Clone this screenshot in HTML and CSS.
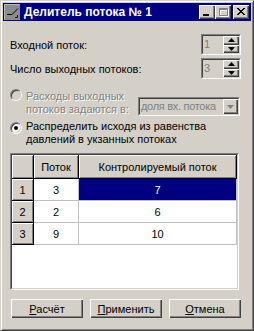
FILE: index.html
```html
<!DOCTYPE html>
<html lang="ru">
<head>
    <meta charset="UTF-8">
    <meta name="viewport" content="width=device-width, initial-scale=1.0">
    <title>Делитель потока № 1</title>
    <link rel="stylesheet" href="styles.css">
</head>
<body>

    <div class="window">
        <!-- Заголовок окна -->
        <div class="titlebar">
            <svg class="app-icon" width="16" height="16" viewBox="0 0 16 16">
                <rect x="0" y="0" width="16" height="16" fill="#8c8c8c"/>
                <path d="M0.5 15.5 V0.5 H15.5" fill="none" stroke="#b8b8b8"/>
                <path d="M3 10.5 H8 L14 4.5" fill="none" stroke="#000"/>
                <path d="M11 13.5 H13.5 V11" fill="none" stroke="#000"/>
            </svg>
            <span class="title">Делитель потока № 1</span>
            <div class="caption-btns">
                <div class="cap-btn">
                    <svg width="16" height="14"><rect x="4" y="9" width="6" height="2" fill="#000"/></svg>
                </div>
                <div class="cap-btn">
                    <svg width="16" height="14">
                        <path d="M4.5 3.5 H12.5 V10.5 H4.5 Z M4.5 4.5 H12.5" fill="none" stroke="#fff" transform="translate(1 1)"/>
                        <path d="M3.5 2.5 H11.5 V9.5 H3.5 Z M3.5 3.5 H11.5" fill="none" stroke="#808080" transform="translate(1 1)"/>
                    </svg>
                </div>
                <div class="cap-btn close">
                    <svg width="16" height="14"><path d="M4 3 L11 10 M5 3 L12 10 M11 3 L4 10 M12 3 L5 10" stroke="#000" stroke-width="1"/></svg>
                </div>
            </div>
        </div>

        <div class="content">
            <div class="field-row">
                <span>Входной поток:</span>
                <div class="spin">
                    <div class="spin-inner">
                        <span class="spin-value">1</span>
                        <div class="spin-btns">
                            <div class="spin-btn"><svg width="7" height="4"><path d="M3.5 0 L7 4 H0 Z" fill="#000"/></svg></div>
                            <div class="spin-btn"><svg width="7" height="4"><path d="M0 0 H7 L3.5 4 Z" fill="#000"/></svg></div>
                        </div>
                    </div>
                </div>
            </div>
            <div class="field-row">
                <span>Число выходных потоков:</span>
                <div class="spin">
                    <div class="spin-inner">
                        <span class="spin-value">3</span>
                        <div class="spin-btns">
                            <div class="spin-btn"><svg width="7" height="4"><path d="M3.5 0 L7 4 H0 Z" fill="#000"/></svg></div>
                            <div class="spin-btn"><svg width="7" height="4"><path d="M0 0 H7 L3.5 4 Z" fill="#000"/></svg></div>
                        </div>
                    </div>
                </div>
            </div>

            <!-- Переключатели -->
            <div class="option first disabled">
                <span class="radio"><span class="radio-in"></span></span>
                <div class="option-text">
                    <div class="line">Расходы выходных</div>
                    <div class="line-combo">
                        <span>потоков задаются в:</span>
                        <div class="combo">
                            <div class="combo-inner">
                                <span class="combo-value">доля вх. потока</span>
                                <div class="combo-btn"><svg width="7" height="4"><path d="M0 0 H7 L3.5 4 Z" fill="#808080"/></svg></div>
                            </div>
                        </div>
                    </div>
                </div>
            </div>
            <div class="option second">
                <span class="radio"><span class="radio-in checked"></span></span>
                <div class="option-text">
                    <div class="line">Распределить исходя из равенства</div>
                    <div class="line">давлений в укзанных потоках</div>
                </div>
            </div>

            <!-- Таблица потоков -->
            <div class="grid">
                <div class="grid-inner">
                    <div class="cell fixed"></div>
                    <div class="cell fixed">Поток</div>
                    <div class="cell fixed">Контролируемый поток</div>

                    <div class="cell fixed">1</div>
                    <div class="cell">3</div>
                    <div class="cell selected">7</div>

                    <div class="cell fixed">2</div>
                    <div class="cell">2</div>
                    <div class="cell">6</div>

                    <div class="cell fixed">3</div>
                    <div class="cell">9</div>
                    <div class="cell">10</div>
                </div>
            </div>

            <div class="buttons">
                <button class="btn"><u>Р</u>асчёт</button>
                <button class="btn"><u>П</u>рименить</button>
                <button class="btn"><u>О</u>тмена</button>
            </div>
        </div>
    </div>

</body>
</html>
```

FILE: styles.css
```css
/* Сброс */
* {
    box-sizing: border-box;
}

body {
    margin: 0;
    background: #d4d0c8;
    font-family: "Liberation Sans", Arial, sans-serif;
    font-size: 11px;
    color: #000;
}

/* Рамка окна */
.window {
    width: 254px;
    height: 331px;
    background: #d4d0c8;
    border: 1px solid;
    border-color: #d4d0c8 #404040 #404040 #d4d0c8;
    box-shadow: inset 1px 1px #fff, inset -1px -1px #808080;
    padding: 2px;
}

/* Заголовок */
.titlebar {
    height: 18px;
    background: #000080;
    display: flex;
    align-items: center;
    padding-left: 1px;
    padding-right: 2px;
}

.app-icon {
    display: block;
}

.title {
    color: #fff;
    font-weight: bold;
    font-size: 12px;
    margin-left: 4px;
}

.caption-btns {
    margin-left: auto;
    display: flex;
}

.cap-btn {
    width: 16px;
    height: 14px;
    background: #d4d0c8;
    box-shadow: inset 1px 1px #fff, inset -1px -1px #404040, inset -2px -2px #808080;
}

.cap-btn svg {
    display: block;
}

.cap-btn.close {
    margin-left: 2px;
}

/* Содержимое */
.content {
    padding: 13px 10px 0 7px;
}

.field-row {
    display: flex;
    justify-content: space-between;
    align-items: center;
    height: 21px;
    margin-bottom: 3px;
}

/* Поле со счётчиком */
.spin {
    width: 40px;
    height: 21px;
    border: 1px solid;
    border-color: #808080 #fff #fff #808080;
}

.spin-inner {
    height: 100%;
    border: 1px solid;
    border-color: #404040 #d4d0c8 #d4d0c8 #404040;
    display: flex;
}

.spin-value {
    flex: 1;
    color: #808080;
    padding-left: 1px;
    line-height: 16px;
}

.spin-btns {
    width: 16px;
    display: flex;
    flex-direction: column;
}

.spin-btn {
    flex: 1;
    background: #d4d0c8;
    box-shadow: inset 1px 1px #fff, inset -1px -1px #404040, inset -2px -2px #808080;
    display: flex;
    align-items: center;
    justify-content: center;
}

.spin-btn svg {
    display: block;
}

/* Переключатели */
.option {
    display: flex;
    line-height: 13px;
}

.option.first {
    margin-top: 11px;
}

.option.first .radio {
    margin-top: -1px;
}

.option.second {
    margin-top: 4px;
}

.option.second .radio {
    margin-top: 2px;
}

.option.disabled {
    color: #808080;
    text-shadow: 1px 1px #fff;
}

.radio {
    width: 12px;
    height: 12px;
    margin-right: 4px;
    flex: none;
    border-radius: 50%;
    background: linear-gradient(135deg, #808080 50%, #fff 50%);
    padding: 1px;
}

.radio-in {
    display: block;
    width: 10px;
    height: 10px;
    border-radius: 50%;
    background: #fff;
    box-shadow: inset 1px 1px #404040, inset -1px -1px #d4d0c8;
    position: relative;
}

.option.disabled .radio-in {
    background: #d4d0c8;
}

.radio-in.checked::after {
    content: "";
    position: absolute;
    left: 3px;
    top: 3px;
    width: 4px;
    height: 4px;
    border-radius: 50%;
    background: #000;
}

.option-text {
    flex: 1;
}

.line-combo {
    display: flex;
    align-items: flex-end;
    justify-content: space-between;
    margin-top: -6px;
}

/* Выпадающий список */
.combo {
    width: 102px;
    height: 19px;
    margin-right: 1px;
    border: 1px solid;
    border-color: #808080 #fff #fff #808080;
    text-shadow: none;
}

.combo-inner {
    height: 100%;
    border: 1px solid;
    border-color: #404040 #d4d0c8 #d4d0c8 #404040;
    display: flex;
}

.combo-value {
    flex: 1;
    color: #808080;
    padding-left: 1px;
    line-height: 15px;
    letter-spacing: -0.3px;
    white-space: nowrap;
    overflow: hidden;
}

.combo-btn {
    width: 15px;
    flex: none;
    background: #d4d0c8;
    box-shadow: inset 1px 1px #fff, inset -1px -1px #404040, inset -2px -2px #808080;
    display: flex;
    align-items: center;
    justify-content: center;
}

.combo-btn svg {
    display: block;
}

/* Таблица */
.grid {
    margin-top: 7px;
    width: 229px;
    height: 137px;
    border: 1px solid;
    border-color: #808080 #fff #fff #808080;
    background: #fff;
}

.grid-inner {
    height: 100%;
    border: 1px solid;
    border-color: #404040 #d4d0c8 #d4d0c8 #404040;
    display: grid;
    grid-template-columns: 22px 45px 158px;
    grid-template-rows: 24px repeat(3, 22px);
    align-content: start;
}

.cell {
    border-right: 1px solid #c0c0c0;
    border-bottom: 1px solid #c0c0c0;
    display: flex;
    align-items: center;
    justify-content: center;
}

.cell.fixed {
    background: #d4d0c8;
    border-color: #000;
    box-shadow: inset 1px 1px #fff, inset -1px -1px #808080;
}

.cell.selected {
    background: #000080;
    color: #fff;
}

/* Кнопки */
.buttons {
    display: flex;
    gap: 7px;
    margin-top: 9px;
    padding-left: 1px;
}

.btn {
    width: 72px;
    height: 19px;
    padding: 0;
    font-family: inherit;
    font-size: 11px;
    color: #000;
    background: #d4d0c8;
    border: none;
    box-shadow: inset 1px 1px #fff, inset -1px -1px #404040, inset -2px -2px #808080;
}
```
